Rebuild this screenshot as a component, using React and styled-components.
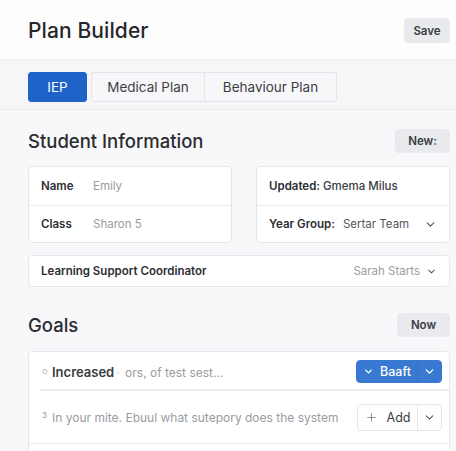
import styled, { createGlobalStyle } from "styled-components"
import { ChevronDown, Plus } from "lucide-react"

const Global = createGlobalStyle`
  * { box-sizing: border-box; }
  body {
    margin: 0;
    background: #f8f8fa;
    font-family: Inter, "Noto Sans", sans-serif;
    color: #2a2c30;
    overflow: hidden;
  }
`

function InfoRow({ label, value, chevron, last }) {
  return (
    <Row last={last}>
      <Label>{label}</Label>
      <Value>{value}</Value>
      {chevron && <Chev><ChevronDown size={13} strokeWidth={2.2} /></Chev>}
    </Row>
  )
}

export default function App() {
  return (<>
    <Global />
    <Header>
      <Title>Plan Builder</Title>
      <GrayButton w={46} h={25}>Save</GrayButton>
    </Header>

    <TabBar>
      <Tabs>
        <Tab active w={59}>IEP</Tab>
        <Tab w={114}>Medical Plan</Tab>
        <Tab w={133} last>Behaviour Plan</Tab>
      </Tabs>
    </TabBar>

    <Main>
      <SectionHead top={19}>
        <Heading>Student Information</Heading>
        <GrayButton w={55} h={24}>New:</GrayButton>
      </SectionHead>

      <CardGrid>
        <Card>
          <InfoRow label="Name" value="Emily" />
          <InfoRow label="Class" value="Sharon 5" last />
        </Card>
        <Card>
          <Row>
            <Label>Updated: <Strong>Gmema Milus</Strong></Label>
          </Row>
          <InfoRow label="Year Group:" value={<Dark>Sertar Team</Dark>} chevron last />
        </Card>
      </CardGrid>

      <WideCard>
        <Label>Learning Support Coordinator</Label>
        <Value right>Sarah Starts</Value>
        <Chev small><ChevronDown size={11} strokeWidth={2.2} /></Chev>
      </WideCard>

      <SectionHead top={26}>
        <Heading>Goals</Heading>
        <GrayButton w={53} h={24}>Now</GrayButton>
      </SectionHead>

      <GoalsCard>
        <GoalRow h={39} divider>
          <Bullet>○</Bullet>
          <GoalText><b>Increased</b><Dot>·</Dot> ors, of test sest...</GoalText>
          <Split blue>
            <SplitMain blue><ChevronDown size={11} strokeWidth={3} /> Baaft</SplitMain>
            <SplitSide blue><ChevronDown size={13} strokeWidth={2.6} /></SplitSide>
          </Split>
        </GoalRow>
        <GoalRow h={53} full>
          <Bullet num>3</Bullet>
          <GoalText>In your mite. Ebuul what sutepory does the system</GoalText>
          <Split add>
            <SplitMain><Plus size={13} strokeWidth={1.8} color="#8a8d93" /> Add</SplitMain>
            <SplitSide><ChevronDown size={13} strokeWidth={2} /></SplitSide>
          </Split>
        </GoalRow>
        <GoalRow h={40} />
      </GoalsCard>
    </Main>
  </>)
}

const Header = styled.header`
  height: 60px;
  background: #fdfdfe;
  display: flex;
  align-items: center;
  justify-content: space-between;
  padding: 2px 6px 0 28px;
  border-bottom: 1px solid #efeff2;
`

const Title = styled.h1`
  margin: 0;
  font-size: 21px;
  font-weight: 500;
  color: #25272b;
  letter-spacing: 0.1px;
`

const GrayButton = styled.button`
  width: ${p => p.w}px;
  height: ${p => p.h}px;
  border: none;
  border-radius: 4px;
  background: #e9eaee;
  color: #3a3c42;
  font-family: inherit;
  font-size: 11.5px;
  font-weight: 600;
  padding: 0;
`

const TabBar = styled.div`
  height: 50px;
  background: #f6f6f8;
  border-bottom: 1px solid #ebebee;
  padding: 12px 28px 0;
`

const Tabs = styled.div`
  display: flex;
`

const Tab = styled.div`
  width: ${p => p.w}px;
  height: 30px;
  display: flex;
  align-items: center;
  justify-content: center;
  font-size: 13.5px;
  color: ${p => p.active ? "#fff" : "#3c3e44"};
  background: ${p => p.active ? "#1e64c8" : "#f7f7f9"};
  border: 1px solid ${p => p.active ? "#1e64c8" : "#e4e5e9"};
  margin-right: ${p => p.active ? "4px" : "-1px"};
  border-radius: ${p => p.active ? "3px" : p.last ? "0 3px 3px 0" : "3px 0 0 3px"};
`

const Main = styled.main`
  padding: 0 6px 0 28px;
`

const SectionHead = styled.div`
  margin-top: ${p => p.top}px;
  display: flex;
  align-items: center;
  justify-content: space-between;
`

const Heading = styled.h2`
  margin: 0;
  font-size: 18.5px;
  font-weight: 500;
  color: #2a2c30;
`

const CardGrid = styled.div`
  margin-top: 13px;
  display: grid;
  grid-template-columns: 204px 194px;
  gap: 24px;
`

const Card = styled.div`
  background: #fff;
  border: 1px solid #e6e7ea;
  border-radius: 4px;
  display: flex;
  flex-direction: column;
`

const Row = styled.div`
  height: ${p => p.last ? 36 : 39}px;
  display: flex;
  align-items: center;
  padding: 0 12px;
  border-bottom: ${p => p.last ? "none" : "1px solid #ececef"};
`

const Label = styled.span`
  font-size: 11.5px;
  font-weight: 600;
  color: #2c2e33;
  min-width: 52px;
`

const Strong = styled.span`
  color: #3a3c42;
  font-weight: 500;
`

const Value = styled.span`
  font-size: 11.5px;
  color: #9a9ca2;
  margin-left: ${p => p.right ? "auto" : "0"};
`

const Dark = styled.span`
  color: #55585e;
  margin-left: 8px;
`

const Chev = styled.span`
  margin-left: ${p => p.small ? "6px" : "auto"};
  display: flex;
  color: #55585e;
`

const WideCard = styled.div`
  margin-top: 12px;
  height: 32px;
  background: #fff;
  border: 1px solid #e6e7ea;
  border-radius: 4px;
  display: flex;
  align-items: center;
  padding: 0 12px;
`

const GoalsCard = styled.div`
  margin-top: 14px;
  background: #fff;
  border: 1px solid #e6e7ea;
  border-radius: 4px 4px 0 0;
`

const GoalRow = styled.div`
  height: ${p => p.h}px;
  display: flex;
  align-items: center;
  padding: 0 7px 0 13px;
  position: relative;
  border-bottom: ${p => p.full ? "1px solid #ececef" : "none"};
  &::after {
    content: "";
    display: ${p => p.divider ? "block" : "none"};
    position: absolute;
    left: 11px;
    right: 0;
    bottom: 0;
    height: 2px;
    background: #ebecef;
  }
`

const Bullet = styled.span`
  width: 10px;
  font-size: ${p => p.num ? "8px" : "6px"};
  color: #9a9ca2;
  margin-top: ${p => p.num ? "-4px" : "0"};
`

const GoalText = styled.span`
  flex: 1;
  font-size: 12px;
  color: #9a9ca2;
  white-space: nowrap;
  overflow: hidden;
  b {
    font-size: 13px;
    font-weight: 600;
    color: #3a3c42;
  }
`

const Dot = styled.span`
  color: #c8c9cd;
  margin: 0 2px;
`

const Split = styled.div`
  display: flex;
  height: ${p => p.blue ? 23 : 27}px;
  border-radius: 4px;
  overflow: hidden;
  border: 1px solid ${p => p.blue ? "#3a79d2" : "#e3e4e8"};
  background: ${p => p.blue ? "#3a79d2" : "#fff"};
  margin-left: ${p => p.add ? "6px" : "0"};
`

const SplitMain = styled.div`
  width: ${p => p.blue ? 61 : 60}px;
  display: flex;
  align-items: center;
  justify-content: center;
  gap: ${p => p.blue ? "6px" : "9px"};
  font-size: 12.5px;
  font-weight: ${p => p.blue ? 500 : 400};
  color: ${p => p.blue ? "#fff" : "#3a3c42"};
  border-right: 1px solid ${p => p.blue ? "#3370c6" : "#e8e9ec"};
`

const SplitSide = styled.div`
  width: 23px;
  display: flex;
  align-items: center;
  justify-content: center;
  color: ${p => p.blue ? "#fff" : "#55585e"};
`
